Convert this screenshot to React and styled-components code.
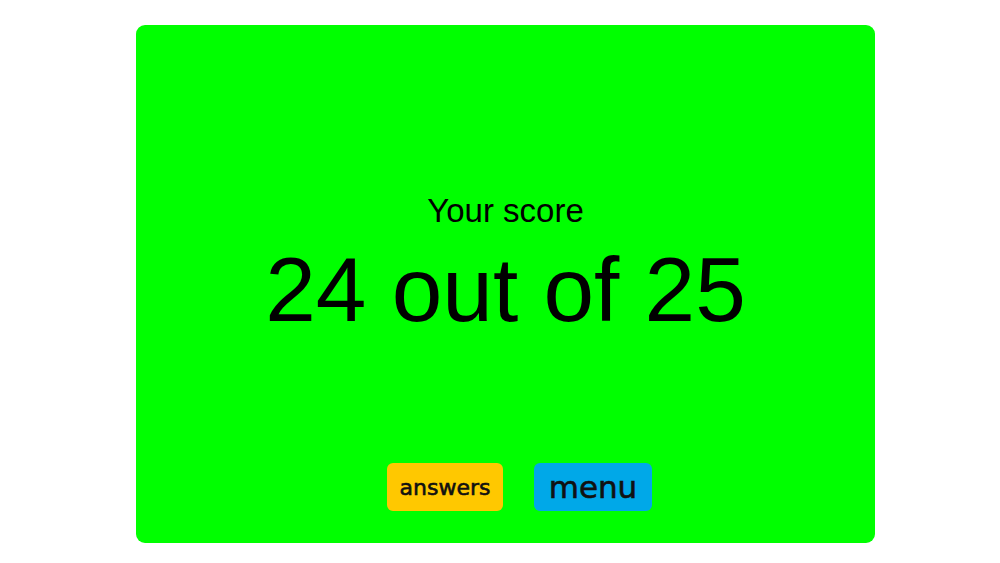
import React from "react";
import styled, { createGlobalStyle } from "styled-components";

const Global = createGlobalStyle`
  html, body { margin: 0; padding: 0; background: #ffffff; }
  body { font-family: "Liberation Sans", Arial, sans-serif; }
`;

const Page = styled.div`
  width: 1000px;
  height: 563px;
  display: flex;
  justify-content: center;
  padding-top: 25px;
  padding-left: 11px;
  box-sizing: border-box;
`;

const Card = styled.div`
  width: 739px;
  height: 518px;
  background: #00ff00;
  border-radius: 9px;
  display: flex;
  flex-direction: column;
  align-items: center;
  padding: 167px 0 32px;
  box-sizing: border-box;
`;

const Label = styled.div`
  font-family: "Liberation Sans", Arial, sans-serif;
  font-size: 33px;
  line-height: 1.15;
  color: #000;
  margin-bottom: 8px;
`;

const Score = styled.div`
  font-family: "Liberation Sans", Arial, sans-serif;
  font-size: 91px;
  line-height: 1.15;
  color: #000;
`;

const ButtonRow = styled.div`
  margin-top: auto;
  display: flex;
  gap: 31px;
  padding-left: 28px;
`;

const Button = styled.button`
  height: 48px;
  width: ${(p) => p.$w}px;
  border: none;
  border-radius: 6px;
  background: ${(p) => p.$bg};
  font-family: "DejaVu Sans", Verdana, sans-serif;
  font-size: ${(p) => p.$size}px;
  color: #111;
  -webkit-text-stroke: 0.6px #111;
  padding: 0;
  display: flex;
  align-items: center;
  justify-content: center;
  cursor: pointer;
`;

export default function App() {
  return (
    <>
      <Global />
      <Page>
        <Card>
          <Label>Your score</Label>
          <Score>24 out of 25</Score>
          <ButtonRow>
            <Button $w={116} $bg="#ffc800" $size={22}>answers</Button>
            <Button $w={118} $bg="#00a8e8" $size={31}>menu</Button>
          </ButtonRow>
        </Card>
      </Page>
    </>
  );
}
